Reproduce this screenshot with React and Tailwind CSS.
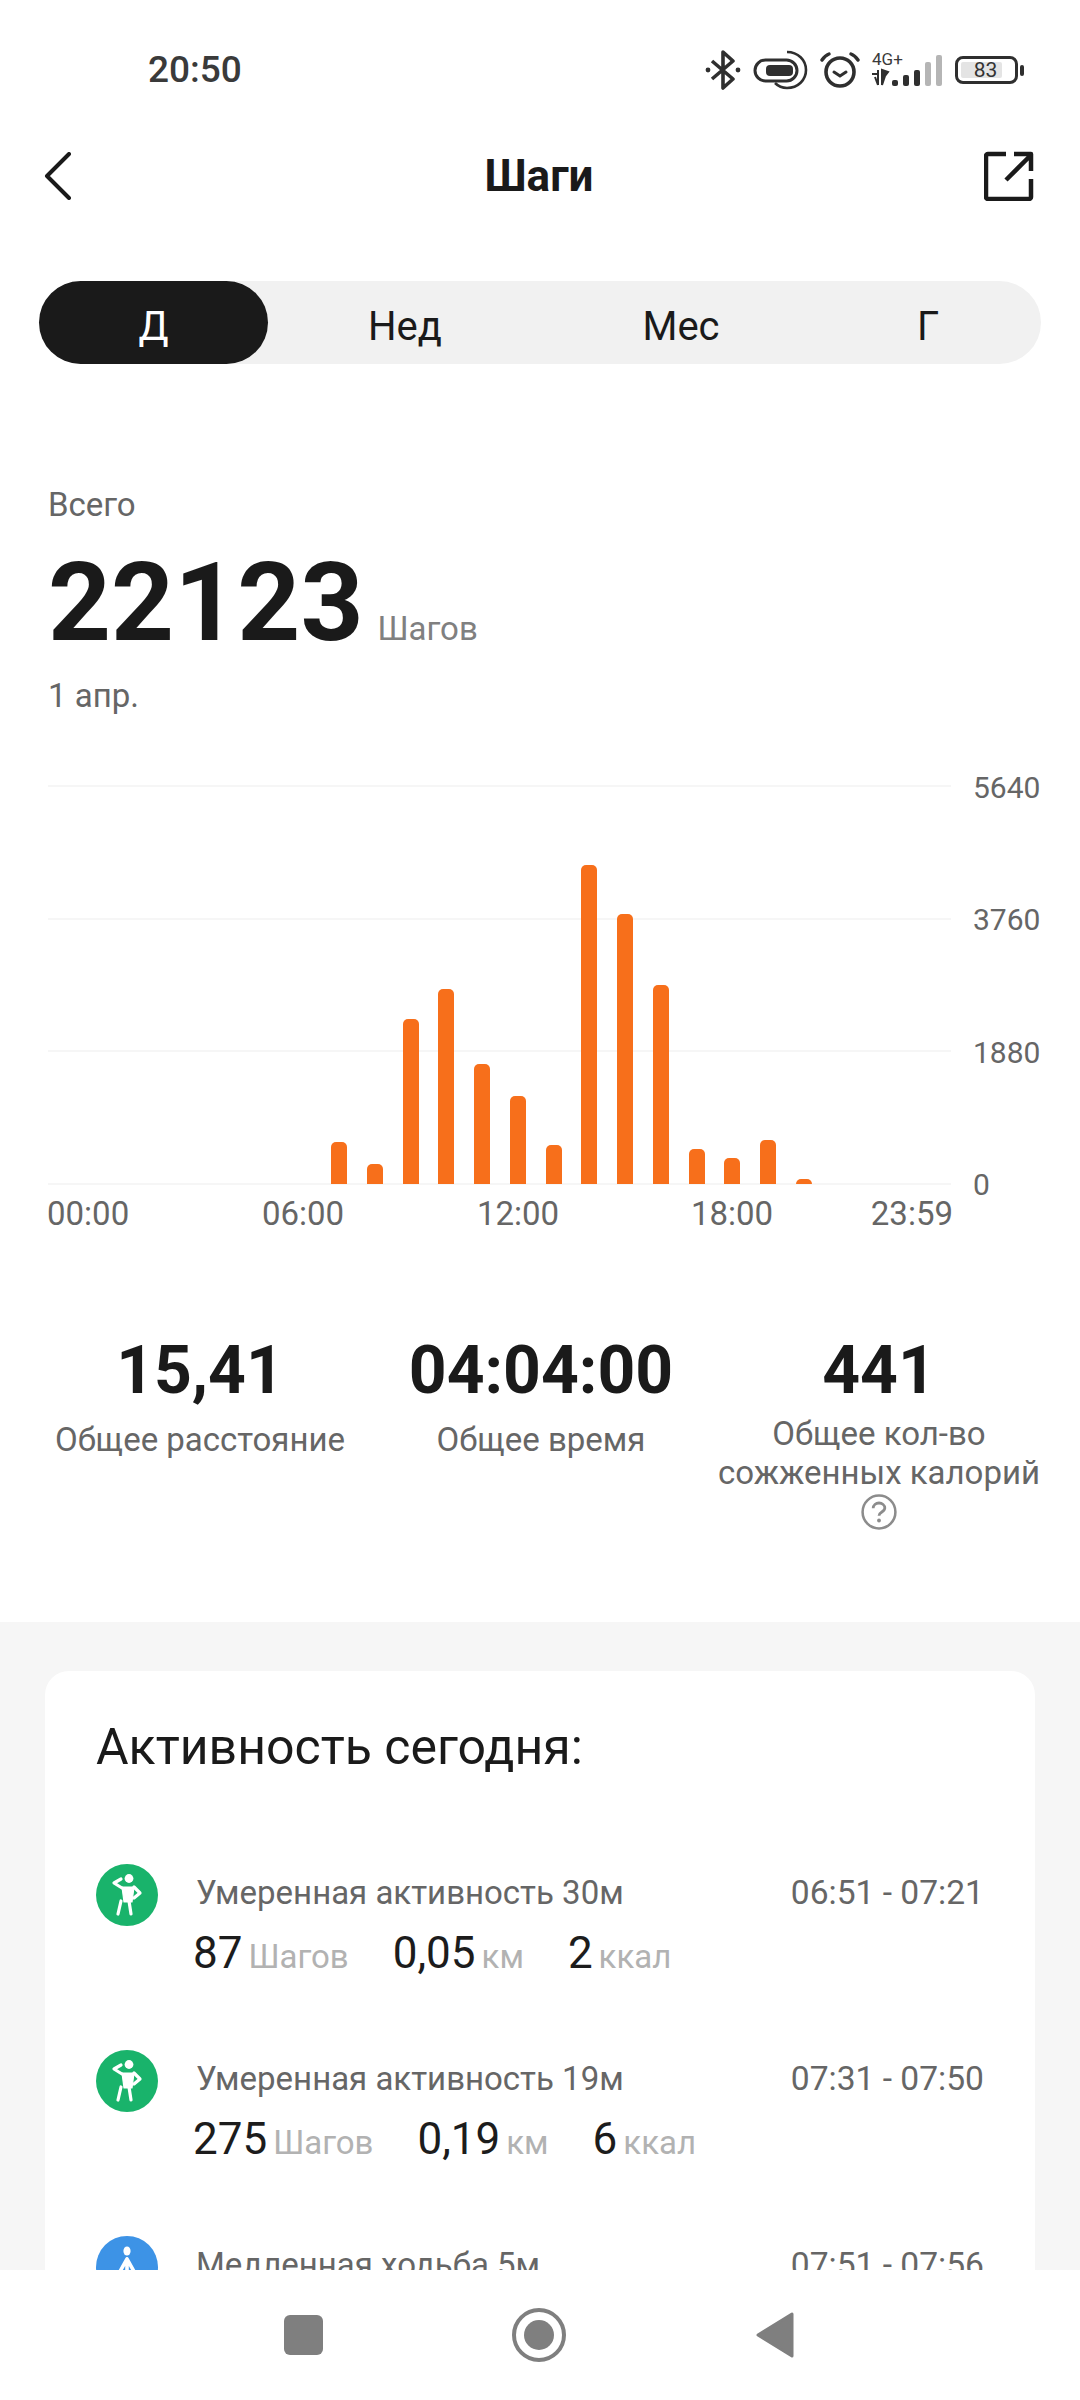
import React from 'react';

const gridLabels = ['5640', '3760', '1880', '0'];
const barHeights = [42, 20, 165, 195, 120, 88, 39, 319, 270, 199, 35, 26, 44, 5];

const activities = [
  {
    type: 'moderate',
    title: 'Умеренная активность 30м',
    time: '06:51 - 07:21',
    steps: '87',
    distance: '0,05',
    calories: '2',
  },
  {
    type: 'moderate',
    title: 'Умеренная активность 19м',
    time: '07:31 - 07:50',
    steps: '275',
    distance: '0,19',
    calories: '6',
  },
  {
    type: 'slow',
    title: 'Медленная ходьба 5м',
    time: '07:51 - 07:56',
  },
];

const StatusIcons = () => (
  <div className="flex items-center">
    <svg width="36" height="40" viewBox="0 0 36 40" fill="none" stroke="#2f2f2f" strokeWidth="3.6" strokeLinejoin="round">
      <path d="M7 11 28 29 18 38V2l10 9L7 29" />
      <circle cx="3" cy="20" r="2.4" fill="#2f2f2f" stroke="none" />
      <circle cx="33" cy="20" r="2.4" fill="#2f2f2f" stroke="none" />
    </svg>
    <svg className="ml-[12px]" width="56" height="40" viewBox="0 0 56 40" fill="none" stroke="#2f2f2f">
      <rect x="2" y="10" width="42" height="21" rx="10.5" strokeWidth="3" />
      <rect x="13" y="15" width="27" height="11" rx="4" fill="#2f2f2f" stroke="none" />
      <path d="M34 2c11 0 19 8 19 18s-8 18-19 18c-5 0-8-1-12-5" strokeWidth="2.6" />
    </svg>
    <svg className="ml-[11px]" width="40" height="40" viewBox="0 0 40 40" fill="none" stroke="#2f2f2f" strokeLinecap="round">
      <circle cx="20" cy="22" r="14" strokeWidth="3.6" />
      <path d="M14 22l6 4 6-4" strokeWidth="3" />
      <path d="M2 10c2-3 4-5 7-6M38 10c-2-3-4-5-7-6" strokeWidth="3.4" />
    </svg>
    <svg className="ml-[11px]" width="72" height="40" viewBox="0 0 72 40">
      <text x="1" y="15" fontSize="17" fill="#3a3a3a" fontFamily="Roboto, sans-serif">4G+</text>
      <path d="M7 20v15M4 27l3 8M1 24h5M11 20v15l3-9 3-4z" fill="#2f2f2f" stroke="#2f2f2f" strokeWidth="2" />
      <rect x="21" y="30" width="6" height="6" rx="2" fill="#2f2f2f" />
      <rect x="32" y="25" width="6" height="11" rx="2" fill="#2f2f2f" />
      <rect x="43" y="20" width="6" height="16" rx="2" fill="#2f2f2f" />
      <rect x="54" y="12" width="6" height="24" rx="2" fill="#b5b5b5" />
      <rect x="65" y="5" width="6" height="31" rx="2" fill="#b5b5b5" />
    </svg>
    <div className="ml-[12px] flex items-center">
      <div className="relative flex h-[28px] w-[63px] items-center rounded-[8px] border-[3px] border-[#2f2f2f] p-[3px]">
        <div className="flex h-full w-[41px] items-center justify-center rounded-[2px] bg-[#e4e4e4] pl-[8px] text-[21px] leading-none text-[#333333]">83</div>
      </div>
      <div className="ml-[2px] h-[11px] w-[4px] rounded-[2px] bg-[#2f2f2f]" />
    </div>
  </div>
);

const HelpIcon = () => (
  <svg width="36" height="36" viewBox="0 0 34 34" fill="none" stroke="#8c8c8c">
    <circle cx="17" cy="17" r="15.5" strokeWidth="2.4" />
    <path d="M11.5 13.5c0-3 2.5-5 5.5-5s5.5 2 5.5 4.8c0 3.7-5.5 3.7-5.5 7.2" strokeWidth="2.6" />
    <circle cx="17" cy="25" r="1.8" fill="#8c8c8c" stroke="none" />
  </svg>
);

const ModerateFigure = () => (
  <svg width="62" height="62" viewBox="0 0 62 62" fill="none" stroke="#ffffff" strokeLinecap="round" strokeLinejoin="round">
    <circle cx="33" cy="14.5" r="4.4" fill="#ffffff" stroke="none" />
    <path d="M25 15l-7 4 8 5" strokeWidth="3.2" />
    <path d="M38 23l6 6-6 5" strokeWidth="3.2" />
    <path d="M26 23h12l-2 15h-8z" fill="#ffffff" strokeWidth="1.2" />
    <path d="M25 37l-3 13M33 37l2 13" strokeWidth="3.2" />
  </svg>
);

const SlowFigure = () => (
  <svg width="62" height="62" viewBox="0 0 62 62" fill="none" stroke="#ffffff" strokeLinecap="round" strokeLinejoin="round">
    <ellipse cx="31" cy="15" rx="3.6" ry="4.6" fill="#ffffff" stroke="none" />
    <path d="M31 23l-9 16M31 23l9 16M31 23v14l-6 13M31 37l6 13" strokeWidth="3.6" />
  </svg>
);

const Value = ({ value, unit }) => (
  <div className="flex items-baseline">
    <span className="text-[44px] leading-[48px] text-[#1c1c1c]">{value}</span>
    <span className="ml-[6px] text-[33px] leading-[48px] text-[#b2b2b2]">{unit}</span>
  </div>
);

const ActivityRow = ({ item }) => (
  <div className="flex h-[186px] items-start">
    <div className={`flex h-[62px] w-[62px] shrink-0 items-center justify-center rounded-full ${item.type === 'moderate' ? 'bg-[#19b36b]' : 'bg-[#3d93e6]'}`}>
      {item.type === 'moderate' ? <ModerateFigure /> : <SlowFigure />}
    </div>
    <div className="ml-[37px] flex-1 pt-[9px]">
      <div className="flex items-center justify-between pl-[1px] text-[33px] leading-[40px] text-[#666666]">
        <span>{item.title}</span>
        <span className="text-[33.6px]">{item.time}</span>
      </div>
      {item.steps && (
        <div className="mt-[16px] -ml-[2px] flex gap-[44px]">
          <Value value={item.steps} unit="Шагов" />
          <Value value={item.distance} unit="км" />
          <Value value={item.calories} unit="ккал" />
        </div>
      )}
    </div>
  </div>
);

const Stat = ({ value, className, children }) => (
  <div className={`flex shrink-0 flex-col items-center ${className}`}>
    <div className="text-[66px] font-bold leading-[78px] text-[#1a1a1a]">{value}</div>
    {children}
  </div>
);

export default function App() {
  return (
    <div className="flex h-[2400px] w-[1080px] flex-col overflow-hidden bg-white font-['Roboto',sans-serif]">
      <div className="min-h-0 flex-1 overflow-hidden">
        {/* status bar */}
        <div className="flex h-[100px] items-center justify-between pl-[148px] pr-[56px] pt-[40px]">
          <span className="text-[37px] font-medium leading-[42px] text-[#3a3a3a]">20:50</span>
          <StatusIcons />
        </div>

        {/* header */}
        <div className="mt-[26px] flex h-[100px] items-center pl-[44px] pr-[46px]">
          <div className="flex-1">
            <svg width="28" height="48" viewBox="0 0 28 48" fill="none" stroke="#1a1a1a" strokeWidth="4" strokeLinecap="round" strokeLinejoin="round">
              <path d="M25 2 3 24l22 22" />
            </svg>
          </div>
          <h1 className="text-[44px] font-bold leading-[50px] text-[#1a1a1a]">Шаги</h1>
          <div className="flex flex-1 justify-end">
            <svg width="50" height="50" viewBox="0 0 50 50" fill="none" stroke="#1a1a1a" strokeWidth="4.5" strokeLinejoin="round">
              <path d="M22 3H4a2 2 0 0 0-2 2v41a2 2 0 0 0 2 2h41a2 2 0 0 0 2-2V28" />
              <path d="M22 29 46 5M30 3h17v17" />
            </svg>
          </div>
        </div>

        {/* period tabs */}
        <div className="mx-[39px] mt-[55px] flex h-[83px] items-center rounded-full bg-[#f1f1f1] text-[40px] text-[#1a1a1a]">
          <div className="flex h-full w-[229px] items-center justify-center rounded-full bg-[#1a1a1a] pt-[9px] text-white">Д</div>
          <span className="ml-[37px] w-[200px] pt-[9px] text-center">Нед</span>
          <span className="ml-[76px] w-[200px] pt-[9px] text-center">Мес</span>
          <span className="ml-[47px] w-[200px] pt-[9px] text-center">Г</span>
        </div>

        {/* total */}
        <div className="mt-[121px] px-[48px]">
          <div className="text-[33px] leading-[40px] text-[#666666]">Всего</div>
          <div className="mt-[18px] flex items-baseline">
            <span className="text-[110px] font-bold leading-[120px] text-[#1a1a1a]">22123</span>
            <span className="ml-[14px] text-[33px] leading-[40px] text-[#808080]">Шагов</span>
          </div>
          <div className="mt-[13px] text-[33px] leading-[40px] text-[#666666]">1 апр.</div>
        </div>

        {/* chart */}
        <div className="mt-[70px] pl-[48px]">
          <div className="relative flex h-[398px] flex-col justify-between pr-[40px]">
            {gridLabels.map((label) => (
              <div key={label} className="flex h-0 items-center">
                <div className="h-[2px] flex-1 bg-[#f6f6f6]" />
                <span className="ml-[22px] mt-[3px] w-[67px] text-[30px] leading-none text-[#666666]">{label}</span>
              </div>
            ))}
            <div className="absolute bottom-0 left-[283px] flex items-end gap-[19.76px]">
              {barHeights.map((height, i) => (
                <div key={i} className="w-[16px] rounded-t-[5px] bg-[#f76f1b]" style={{ height }} />
              ))}
            </div>
          </div>
          <div className="mt-[10px] -ml-[1px] flex text-[33px] leading-[40px] text-[#666666]">
            <span className="w-[84px] text-left">00:00</span>
            <span className="ml-[130px] w-[84px] text-center">06:00</span>
            <span className="ml-[131px] w-[84px] text-center">12:00</span>
            <span className="ml-[130px] w-[84px] text-center">18:00</span>
            <span className="ml-[95px] w-[84px] text-right">23:59</span>
          </div>
        </div>

        {/* summary */}
        <div className="mt-[98px] flex h-[290px] items-start">
          <Stat value="15,41" className="ml-[50px] w-[300px]">
            <div className="mt-[10px] text-[33px] leading-[40px] text-[#666666]">Общее расстояние</div>
          </Stat>
          <Stat value="04:04:00" className="ml-[41px] w-[300px]">
            <div className="mt-[10px] text-[33px] leading-[40px] text-[#666666]">Общее время</div>
          </Stat>
          <Stat value="441" className="ml-[18px] w-[340px]">
            <div className="mt-[4px] text-center text-[33px] leading-[39px] text-[#666666]">
              Общее кол-во
              <br />
              сожженных калорий
            </div>
            <div className="mt-[2px]"><HelpIcon /></div>
          </Stat>
        </div>

        {/* today's activity */}
        <div className="h-[800px] bg-[#f6f6f6] px-[45px] pt-[49px]">
          <div className="h-full rounded-[24px] bg-white px-[51px] pt-[48px]">
            <h2 className="text-[50px] font-normal leading-[56px] text-[#1a1a1a]">Активность сегодня:</h2>
            <div className="mt-[89px]">
              {activities.map((item) => (
                <ActivityRow key={item.title} item={item} />
              ))}
            </div>
          </div>
        </div>
      </div>

      {/* navigation bar */}
      <div className="flex h-[130px] shrink-0 items-center bg-white pl-[284px]">
        <div className="h-[40px] w-[39px] rounded-[6px] bg-[#7f7f7f]" />
        <svg className="ml-[189px]" width="54" height="54" viewBox="0 0 54 54" fill="none">
          <circle cx="27" cy="27" r="25" stroke="#7f7f7f" strokeWidth="4" />
          <circle cx="27" cy="27" r="15" fill="#7f7f7f" />
        </svg>
        <svg className="ml-[190px]" width="38" height="46" viewBox="0 0 38 46" fill="#7f7f7f" stroke="#7f7f7f" strokeWidth="3" strokeLinejoin="round">
          <path d="M36 2v42L2 23z" />
        </svg>
      </div>
    </div>
  );
}
